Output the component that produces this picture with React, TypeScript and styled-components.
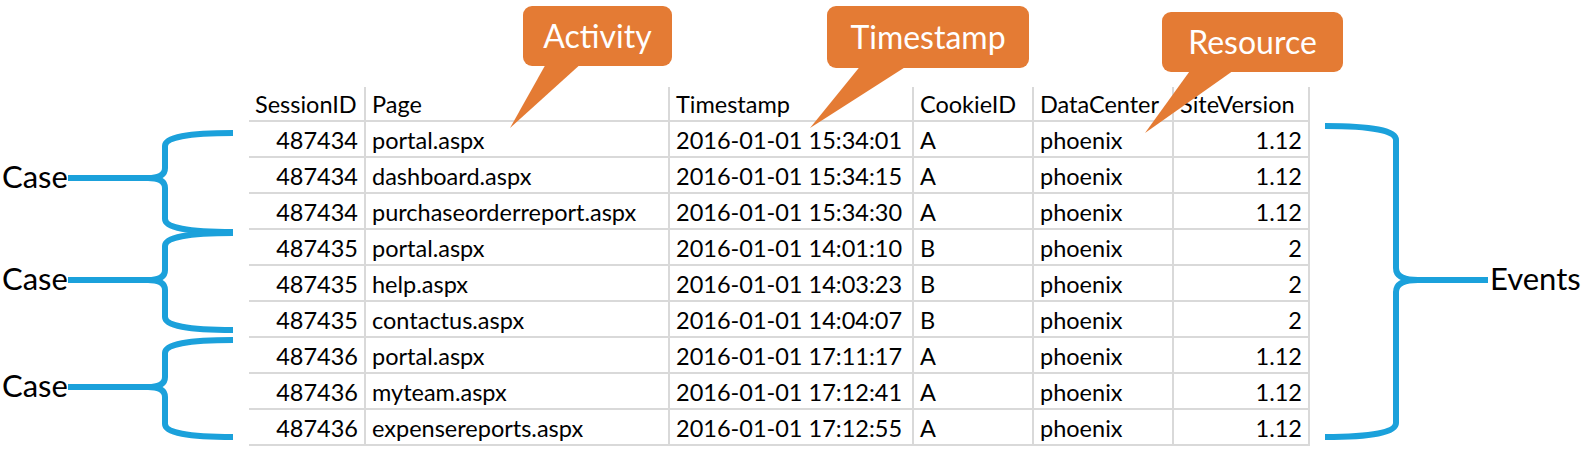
import React from 'react';
import styled, { createGlobalStyle } from 'styled-components';

const BLUE = '#1ba1db';
const ORANGE = '#e47b34';
const GRID = '#d9d9d9';

const GlobalStyle = createGlobalStyle`
  body {
    margin: 0;
    background: #fff;
    font-family: Lato, "Open Sans", sans-serif;
  }
`;

// page: three columns side by side, the callouts lie on top
const Page = styled.div`
  position: relative;
  display: flex;
  align-items: flex-start;
  width: 1587px;
  height: 450px;
  padding-top: 87px;
  box-sizing: border-box;
  overflow: hidden;
`;

const CaseColumn = styled.div`
  display: flex;
  flex-direction: column;
  flex-shrink: 0;
  width: 249px;
  padding-top: 35px;
`;

const CaseGroup = styled.div`
  display: flex;
  align-items: flex-start;
  height: 108px;
`;

const Label = styled.span<{ $mid: number }>`
  flex-shrink: 0;
  margin-top: ${(p) => p.$mid - 21}px;
  font-size: 31px;
  line-height: 38px;
  color: #000;
  white-space: nowrap;
`;

const CaseLabel = styled(Label)`
  width: 68px;
  padding-left: 2px;
  box-sizing: border-box;
`;

const Brace = styled.svg`
  flex-shrink: 0;
  overflow: visible;

  path {
    fill: none;
    stroke: ${BLUE};
    stroke-width: 6;
  }
`;

const Sheet = styled.div`
  display: grid;
  grid-template-columns: 117px 304px 244px 120px 140px 136px;
  flex-shrink: 0;
  font-size: 23.5px;
  color: #000;
`;

const Cell = styled.div<{ $right?: boolean; $head?: boolean }>`
  display: flex;
  align-items: center;
  justify-content: ${(p) => (p.$right ? 'flex-end' : 'flex-start')};
  height: ${(p) => (p.$head ? 35 : 36)}px;
  padding: 3px 6px 0;
  box-sizing: border-box;
  border-right: 2px solid ${GRID};
  border-bottom: 2px solid ${GRID};
  line-height: 1;
  white-space: nowrap;
`;

const EventsColumn = styled.div`
  display: flex;
  align-items: flex-start;
  flex-shrink: 0;
  height: 324px;
  margin-top: 35px;
  padding-left: 12px;
`;

const EventsLabel = styled(Label)`
  margin-left: 0;
`;

const Callout = styled.div<{ $x: number; $y: number; $w: number; $h: number }>`
  position: absolute;
  left: ${(p) => p.$x}px;
  top: ${(p) => p.$y}px;
  width: ${(p) => p.$w}px;
  height: ${(p) => p.$h}px;
  z-index: 2;
`;

const Bubble = styled.div`
  position: relative;
  z-index: 1;
  display: flex;
  align-items: center;
  justify-content: center;
  height: 100%;
  border-radius: 9px;
  background: ${ORANGE};
  color: #fff;
  font-size: 32px;
  line-height: 1;
`;

const Tail = styled.svg`
  position: absolute;
  left: 0;
  top: 0;
  width: 1px;
  height: 1px;
  overflow: visible;

  polygon {
    fill: ${ORANGE};
  }
`;

const headers = ['SessionID', 'Page', 'Timestamp', 'CookieID', 'DataCenter', 'SiteVersion'];

const rows = [
  ['487434', 'portal.aspx', '2016-01-01 15:34:01', 'A', 'phoenix', '1.12'],
  ['487434', 'dashboard.aspx', '2016-01-01 15:34:15', 'A', 'phoenix', '1.12'],
  ['487434', 'purchaseorderreport.aspx', '2016-01-01 15:34:30', 'A', 'phoenix', '1.12'],
  ['487435', 'portal.aspx', '2016-01-01 14:01:10', 'B', 'phoenix', '2'],
  ['487435', 'help.aspx', '2016-01-01 14:03:23', 'B', 'phoenix', '2'],
  ['487435', 'contactus.aspx', '2016-01-01 14:04:07', 'B', 'phoenix', '2'],
  ['487436', 'portal.aspx', '2016-01-01 17:11:17', 'A', 'phoenix', '1.12'],
  ['487436', 'myteam.aspx', '2016-01-01 17:12:41', 'A', 'phoenix', '1.12'],
  ['487436', 'expensereports.aspx', '2016-01-01 17:12:55', 'A', 'phoenix', '1.12'],
];

// numeric columns are right aligned like in Excel
const rightCols = [0, 5];

// brace groups, y values relative to the group's top
const cases = [
  { top: 11, mid: 56, bottom: 110 },
  { top: 3, mid: 50, bottom: 100 },
  { top: 2, mid: 49, bottom: 99 },
];

const callouts = [
  { text: 'Activity', x: 523, y: 6, w: 149, h: 60, tail: '24,56 60,56 -13,122' },
  { text: 'Timestamp', x: 827, y: 6, w: 202, h: 62, tail: '35,58 83,58 -17,122' },
  { text: 'Resource', x: 1162, y: 12, w: 181, h: 60, tail: '30,56 75,56 -17,121' },
];

// left curly brace: ends at the right, point to the left
const leftBrace = (top: number, mid: number, bottom: number) => {
  const e = 165;
  const v = 97;
  return `M ${e} ${top} Q ${v} ${top} ${v} ${top + 13} L ${v} ${mid - 10} Q ${v} ${mid} 80 ${mid} L 0 ${mid}
    M 80 ${mid} Q ${v} ${mid} ${v} ${mid + 10} L ${v} ${bottom - 13} Q ${v} ${bottom} ${e} ${bottom}`;
};

// right curly brace for the events
const rightBrace = (top: number, mid: number, bottom: number) => {
  const e = 3;
  const v = 74;
  return `M ${e} ${top} Q ${v} ${top} ${v} ${top + 14} L ${v} ${mid - 12} Q ${v} ${mid} 96 ${mid} L 166 ${mid}
    M 96 ${mid} Q ${v} ${mid} ${v} ${mid + 12} L ${v} ${bottom - 14} Q ${v} ${bottom} ${e} ${bottom}`;
};

const App: React.FC = () => {
  return (
    <>
      <GlobalStyle />
      <Page>
        <CaseColumn>
          {cases.map((c, i) => (
            <CaseGroup key={i}>
              <CaseLabel $mid={c.mid}>Case</CaseLabel>
              <Brace width={166} height={108} viewBox="0 0 166 108">
                <path d={leftBrace(c.top, c.mid, c.bottom)} />
              </Brace>
            </CaseGroup>
          ))}
        </CaseColumn>

        <Sheet>
          {headers.map((h) => (
            <Cell key={h} $head>{h}</Cell>
          ))}
          {rows.map((r, ri) =>
            r.map((v, ci) => (
              <Cell key={`${ri}-${ci}`} $right={rightCols.includes(ci)}>{v}</Cell>
            ))
          )}
        </Sheet>

        <EventsColumn>
          <Brace width={168} height={324} viewBox="0 0 168 324">
            <path d={rightBrace(4, 158, 315)} />
          </Brace>
          <EventsLabel $mid={158}>Events</EventsLabel>
        </EventsColumn>

        {callouts.map((c) => (
          <Callout key={c.text} $x={c.x} $y={c.y} $w={c.w} $h={c.h}>
            <Tail>
              <polygon points={c.tail} />
            </Tail>
            <Bubble>{c.text}</Bubble>
          </Callout>
        ))}
      </Page>
    </>
  );
};

export default App;
